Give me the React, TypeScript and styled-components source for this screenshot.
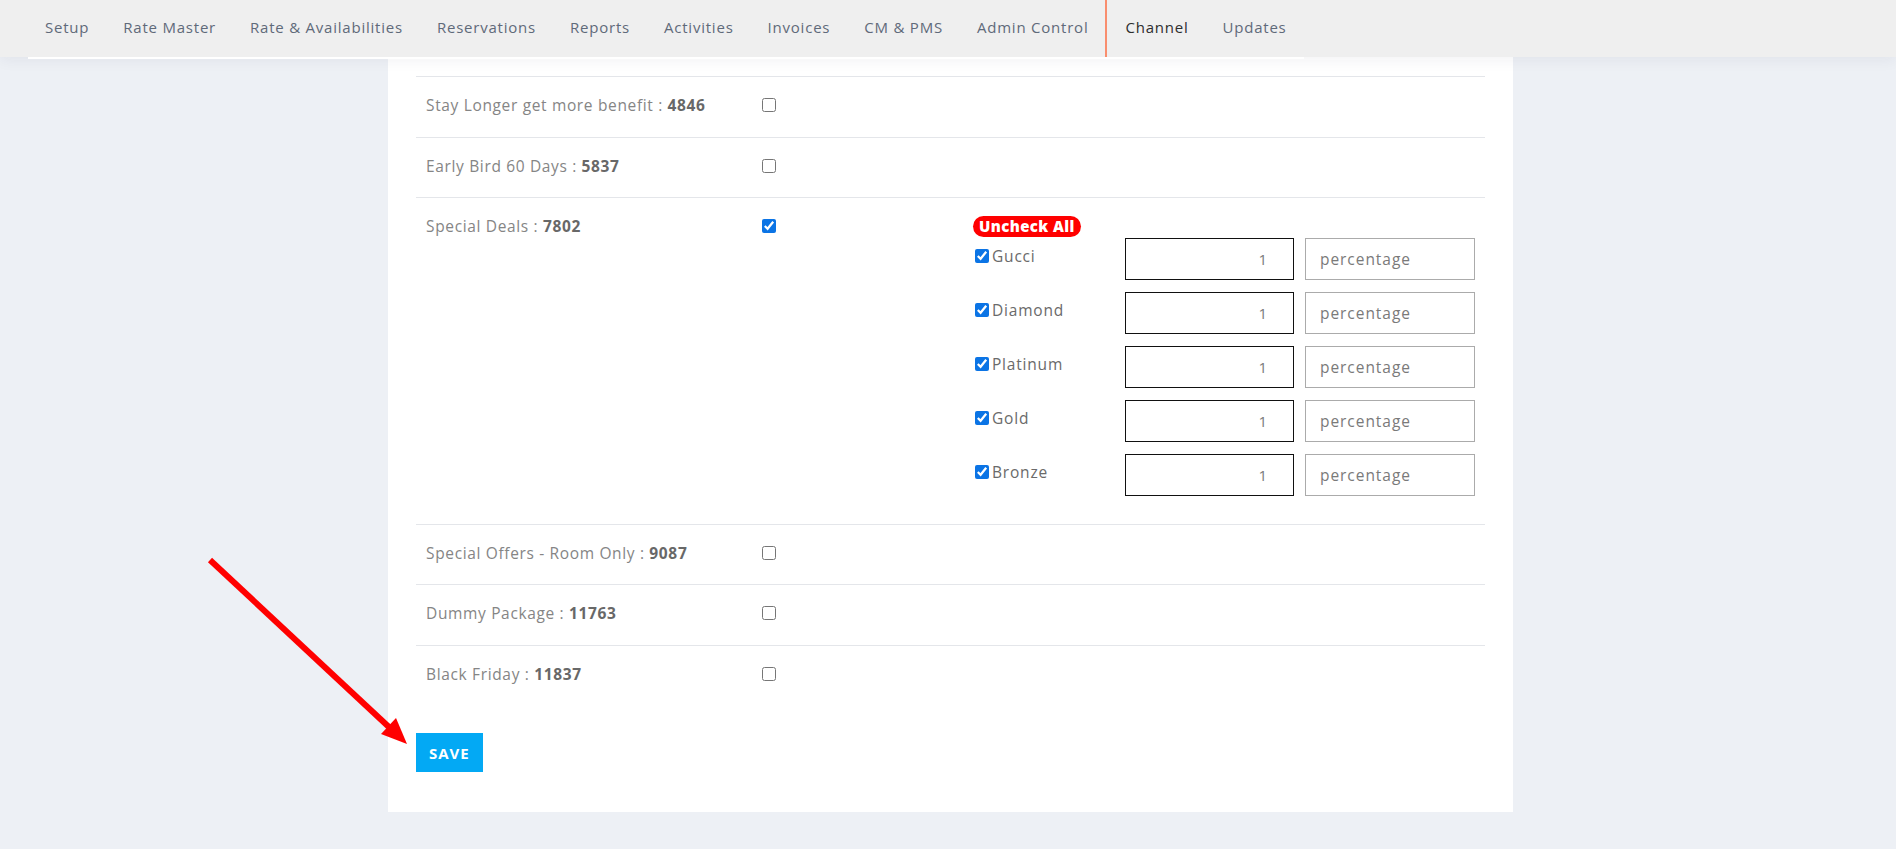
import React from "react";
import styled, { createGlobalStyle } from "styled-components";

const GlobalStyle = createGlobalStyle`
  * { box-sizing: border-box; }
  html, body { margin: 0; padding: 0; }
  body {
    background: #edf0f5;
    font-family: "Open Sans", "Noto Sans", Arial, sans-serif;
  }
  input[type="number"]::-webkit-inner-spin-button,
  input[type="number"]::-webkit-outer-spin-button { -webkit-appearance: none; margin: 0; }
`;

const Page = styled.div`
  position: relative;
  min-height: 100vh;
  background: #edf0f5;
`;

const Nav = styled.nav`
  position: relative;
  z-index: 2;
  height: 57px;
  background: #efefef;
  box-shadow: 0 3px 14px rgba(30, 40, 60, 0.06);
  display: flex;
`;

const NavList = styled.ul`
  list-style: none;
  margin: 0 0 0 28px;
  padding: 0;
  height: 57px;
  box-sizing: content-box;
  border-bottom: 2px solid #ffffff;
  display: flex;
  align-items: stretch;
`;

const NavItem = styled.li<{ $active?: boolean }>`
  display: flex;
  align-items: center;
  padding: 0 17px 4px ${(p) => (p.$active ? "18px" : "17px")};
  border-left: ${(p) => (p.$active ? "2px solid #f98e6e" : "none")};
  font-size: 15px;
  letter-spacing: 0.78px;
  color: ${(p) => (p.$active ? "#2d2d2d" : "#5f6a7a")};
  font-weight: ${(p) => (p.$active ? 500 : 400)};
  white-space: nowrap;
`;

const Panel = styled.main`
  width: 1125px;
  margin-left: 388px;
  background: #ffffff;
  padding: 19px 28px 40px;
`;

const Table = styled.table`
  width: 100%;
  border-collapse: collapse;
  table-layout: fixed;
`;

const Row = styled.tr`
  border-top: 1px solid #e4e6ea;
`;

const Cell = styled.td<{ $w?: number }>`
  width: ${(p) => (p.$w ? `${p.$w}px` : "auto")};
  padding: 18px 10px 21.5px 10px;
  vertical-align: top;
  line-height: 20px;
`;

const Label = styled.span`
  font-size: 15.5px;
  letter-spacing: 0.65px;
  color: #858585;
  font-weight: 400;
  white-space: nowrap;
`;

const Num = styled.b`
  color: #686868;
  font-weight: 700;
`;

const Check = styled.input.attrs({ type: "checkbox" })`
  width: 14px;
  height: 14px;
  margin: 3px 0 0 0;
  accent-color: #0b74e5;
  vertical-align: top;
`;

const Badge = styled.span`
  display: inline-block;
  height: 21px;
  line-height: 21px;
  padding: 0 6px;
  border-radius: 11px;
  background: #ff0000;
  color: #ffffff;
  font-size: 15px;
  font-weight: 800;
  letter-spacing: 0.4px;
  margin-bottom: 1px;
`;

const Options = styled.div`
  display: flex;
  flex-direction: column;
  gap: 12px;
  margin-bottom: 6px;
`;

const OptionRow = styled.div`
  display: flex;
  align-items: center;
  padding-left: 2px;
`;

const OptionLabel = styled.label`
  width: 151px;
  display: flex;
  align-items: flex-start;
  gap: 3px;
  padding-bottom: 6px;
  font-size: 15.5px;
  font-weight: 500;
  letter-spacing: 0.8px;
  color: #6a6a6a;
  line-height: 20px;
`;

const ValueInput = styled.input`
  width: 169px;
  height: 42px;
  border: 1px solid #111111;
  padding: 0 26px 0 8px;
  text-align: right;
  font-family: inherit;
  font-size: 15px;
  color: #7a7a7a;
  background: #fff;
  outline: none;
`;

const TypeInput = styled.input`
  width: 170px;
  height: 42px;
  margin-left: 11px;
  border: 1px solid #ababab;
  padding: 0 10px 0 14px;
  font-family: inherit;
  font-size: 15.5px;
  letter-spacing: 0.95px;
  color: #7a7a7a;
  background: #fff;
  outline: none;
`;

const SaveButton = styled.button`
  margin-top: 28px;
  height: 39px;
  padding: 0 13px;
  border: none;
  background: #03a9f4;
  color: #ffffff;
  font-family: inherit;
  font-size: 15px;
  font-weight: 700;
  letter-spacing: 1px;
  cursor: pointer;
`;

const ArrowOverlay = styled.svg`
  position: absolute;
  left: 200px;
  top: 550px;
  width: 220px;
  height: 205px;
  pointer-events: none;
  z-index: 3;
`;

const navItems = [
  "Setup",
  "Rate Master",
  "Rate & Availabilities",
  "Reservations",
  "Reports",
  "Activities",
  "Invoices",
  "CM & PMS",
  "Admin Control",
  "Channel",
  "Updates",
];

const packages = [
  { name: "Stay Longer get more benefit", id: 4846, checked: false },
  { name: "Early Bird 60 Days", id: 5837, checked: false },
  { name: "Special Deals", id: 7802, checked: true },
  { name: "Special Offers - Room Only", id: 9087, checked: false },
  { name: "Dummy Package", id: 11763, checked: false },
  { name: "Black Friday", id: 11837, checked: false },
];

const tiers = ["Gucci", "Diamond", "Platinum", "Gold", "Bronze"];

export default function App() {
  return (
    <Page>
      <GlobalStyle />
      <Nav>
        <NavList>
          {navItems.map((n) => (
            <NavItem key={n} $active={n === "Channel"}>
              {n}
            </NavItem>
          ))}
        </NavList>
      </Nav>
      <Panel>
        <Table>
          <tbody>
            {packages.map((p) => (
              <Row key={p.id}>
                <Cell $w={336}>
                  <Label>
                    {p.name} : <Num>{p.id}</Num>
                  </Label>
                </Cell>
                <Cell $w={211}>
                  <Check defaultChecked={p.checked} />
                </Cell>
                <Cell>
                  {p.checked && (
                    <>
                      <Badge>Uncheck All</Badge>
                      <Options>
                        {tiers.map((t) => (
                          <OptionRow key={t}>
                            <OptionLabel>
                              <Check defaultChecked />
                              {t}
                            </OptionLabel>
                            <ValueInput type="number" defaultValue={1} />
                            <TypeInput type="text" defaultValue="percentage" readOnly />
                          </OptionRow>
                        ))}
                      </Options>
                    </>
                  )}
                </Cell>
              </Row>
            ))}
          </tbody>
        </Table>
        <SaveButton>SAVE</SaveButton>
      </Panel>
      <ArrowOverlay viewBox="200 550 220 205">
        <line x1="210" y1="560" x2="390" y2="728" stroke="#ff0000" strokeWidth="6" strokeLinecap="butt" />
        <polygon points="407,744 381,734 396,718" fill="#ff0000" />
      </ArrowOverlay>
    </Page>
  );
}
